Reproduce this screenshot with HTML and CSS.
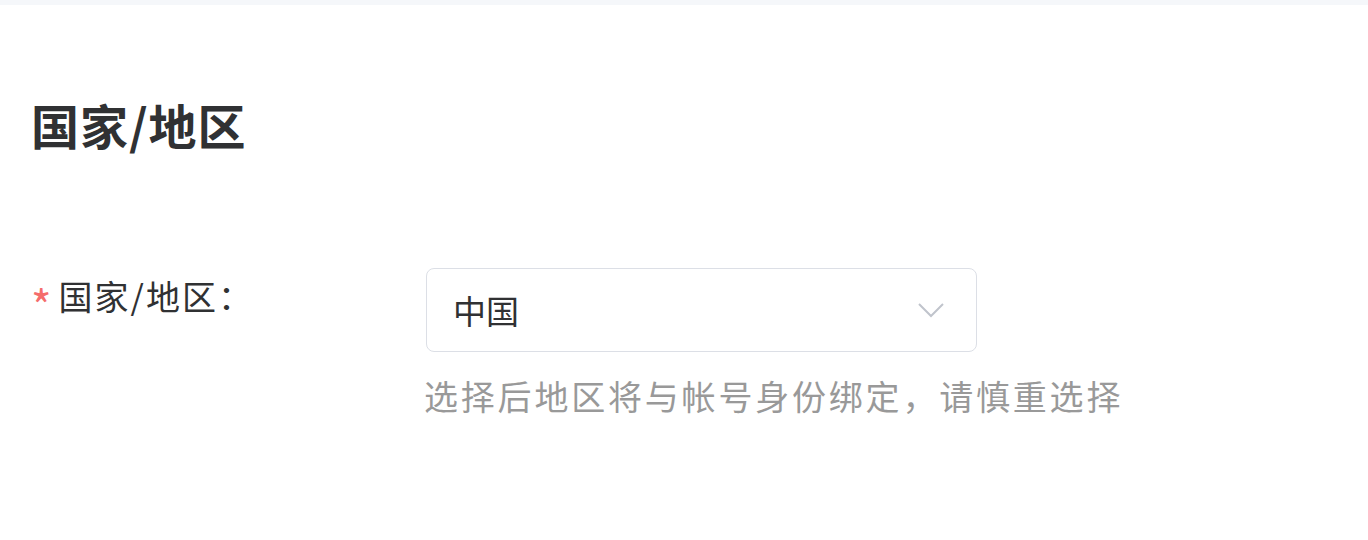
FILE: index.html
```html
<!DOCTYPE html>
<html>
	<head>
		<meta charset="UTF-8">
		<title>国家/地区</title>
		<link rel="stylesheet" href="styles.css">
	</head>
	<body>
		<div class="topbar"></div>
		<div class="panel">
			<h2 class="panel-title">国家/地区</h2>
			<div class="form-item">
				<label class="form-label"><span class="req">*</span>国家/地区：</label>
				<div class="form-control">
					<div class="select">
						<span class="select-value">中国</span>
						<svg class="select-arrow" width="28" height="16" viewBox="0 0 28 16">
							<path d="M2 2 L14 14 L26 2" fill="none" stroke="#c0c4cc" stroke-width="2"/>
						</svg>
					</div>
					<p class="form-tip">选择后地区将与帐号身份绑定，请慎重选择</p>
				</div>
			</div>
		</div>
	</body>
</html>
```

FILE: styles.css
```css
* {margin:0; padding:0; box-sizing:border-box;}
body {background:#fff; font-family:"Noto Sans CJK SC", "Noto Sans", sans-serif; color:#303133;}

.topbar {height:5px; background:#f5f7fa;}

.panel {padding:0 33px;}
.panel-title {margin-top:89px; margin-left:-2px; font-size:48px; line-height:60px; font-weight:700; letter-spacing:1px; color:#303133;}

.form-item {display:flex; margin-top:114px;}
.form-label {width:395px; margin-left:-2px; font-size:34px; line-height:56px; letter-spacing:2px; color:#303133;}
.req {color:#f56c6c; font-size:44px; vertical-align:-13px; margin-right:7px; letter-spacing:0;}

.form-control {width:551px;}
.select {height:84px; border:1px solid #dcdfe6; border-radius:8px; display:flex; align-items:center; justify-content:space-between; padding:0 31px 0 26px;}
.select-value {font-size:33px; color:#303133;}
.form-tip {margin-top:21px; margin-left:-2px; font-size:34px; line-height:46px; letter-spacing:2.8px; color:#999; white-space:nowrap;}
```
